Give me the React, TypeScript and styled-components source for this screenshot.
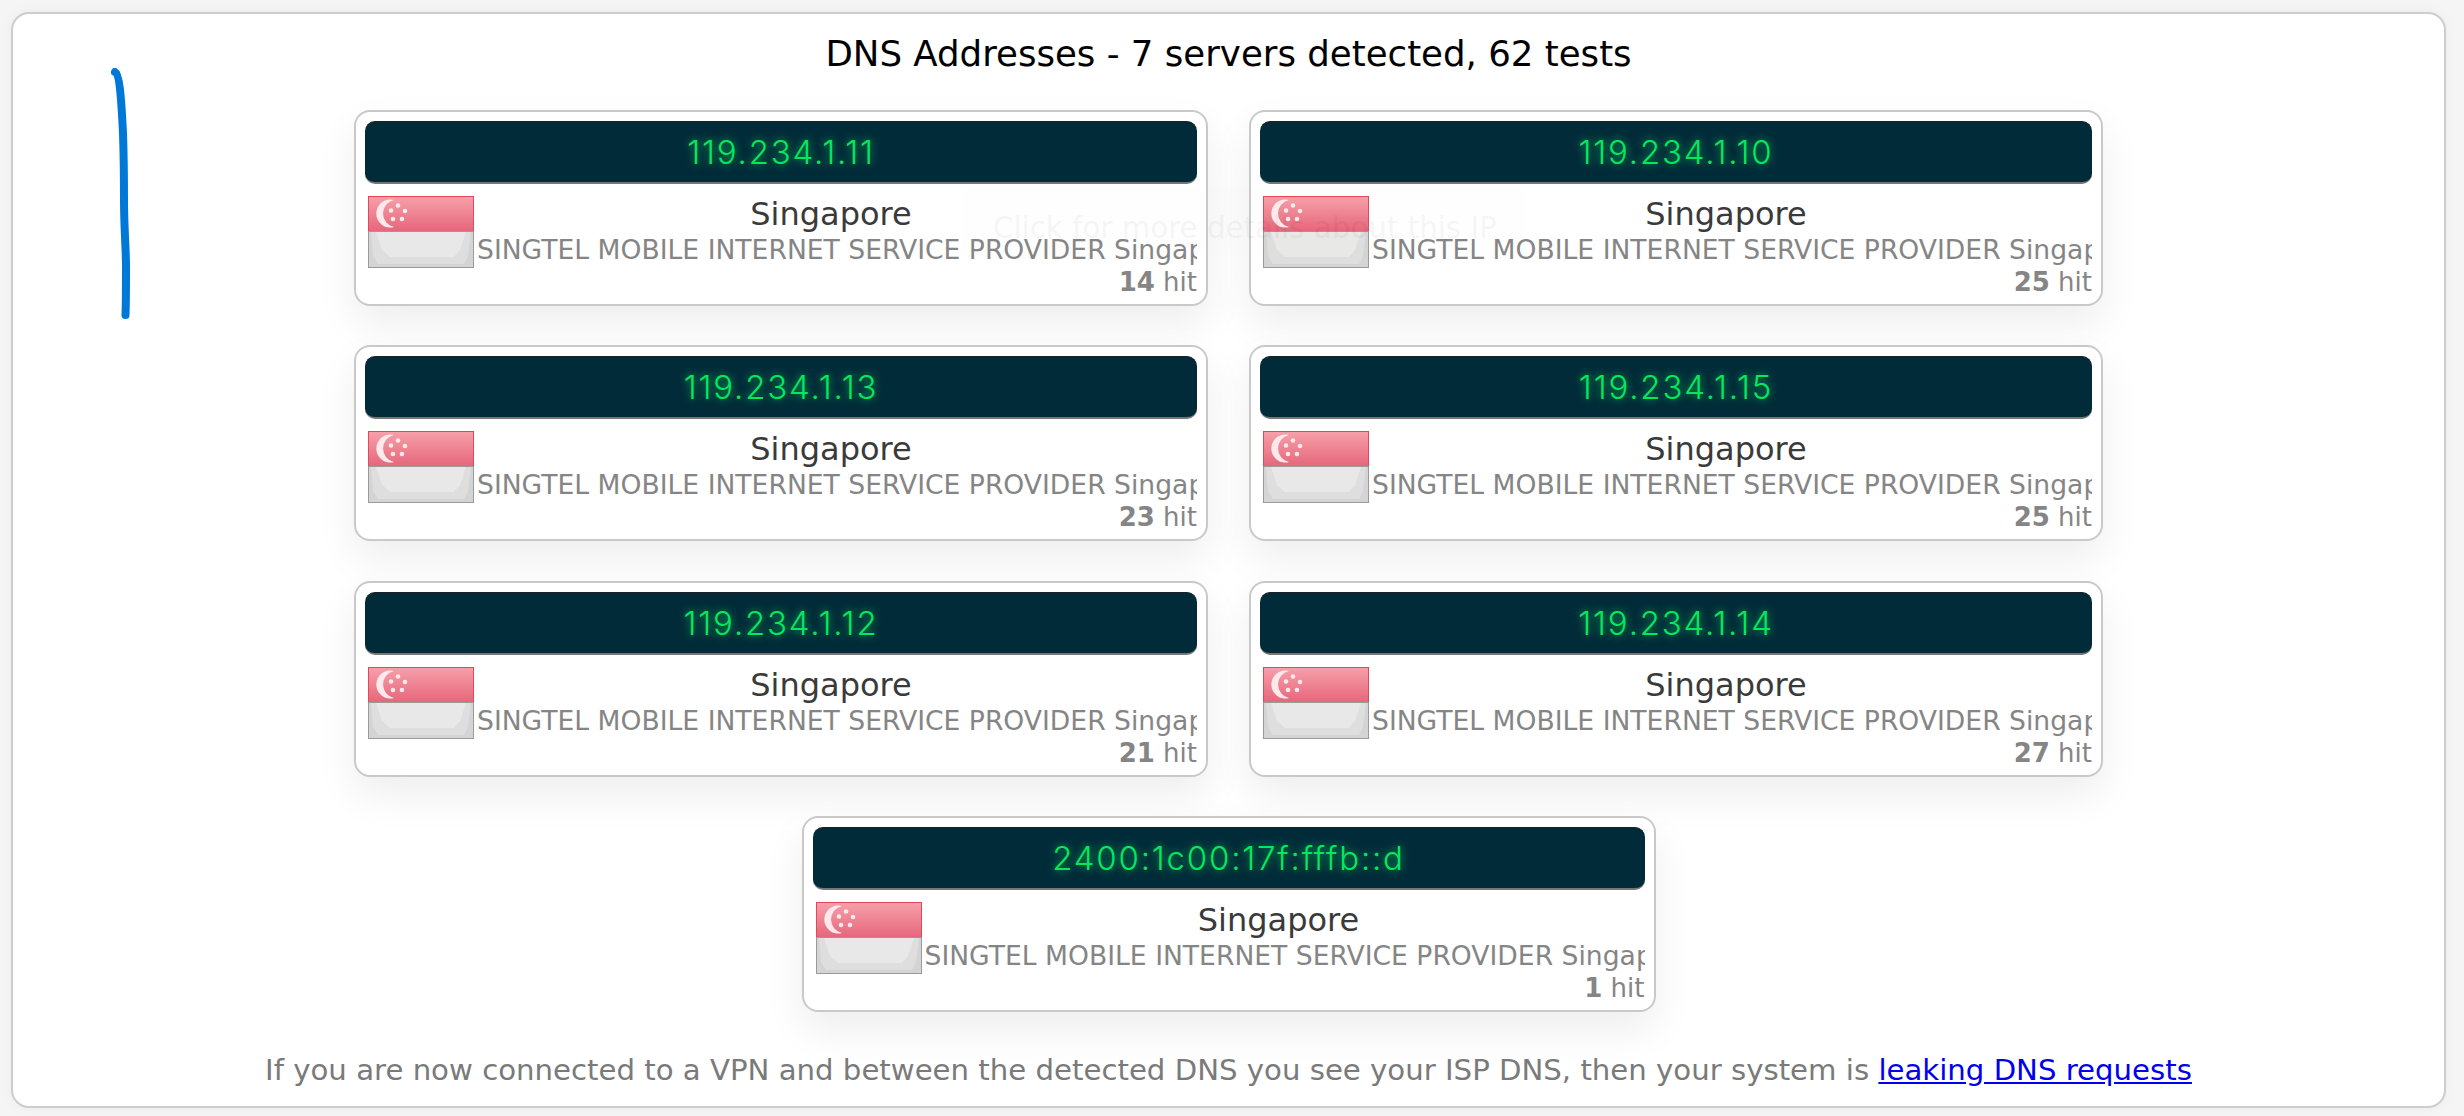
import React from 'react';
import styled, { createGlobalStyle } from 'styled-components';

const servers = [
  { ip: '119.234.1.11', hits: 14 },
  { ip: '119.234.1.10', hits: 25 },
  { ip: '119.234.1.13', hits: 23 },
  { ip: '119.234.1.15', hits: 25 },
  { ip: '119.234.1.12', hits: 21 },
  { ip: '119.234.1.14', hits: 27 },
  { ip: '2400:1c00:17f:fffb::d', hits: 1 },
];

const Flag = () => (
  <FlagSvg viewBox="0 0 106 72" aria-hidden="true">
    <defs>
      <linearGradient id="sgRed" x1="0" y1="0" x2="0" y2="1">
        <stop offset="0" stopColor="#f7a0aa" />
        <stop offset="1" stopColor="#e5667a" />
      </linearGradient>
    </defs>
    <rect x="0.5" y="0.5" width="105" height="35" fill="url(#sgRed)" stroke="#e4465c" />
    <rect x="0.5" y="35.5" width="105" height="36" fill="#d4d4d4" stroke="#9a9a9a" />
    <path d="M3 36H103L100 60 96 68H10L5 60Z" fill="#dedede" />
    <path d="M8 36H98L92 54 86 61H22L14 54Z" fill="#e8e8e8" />
    <path d="M26 4A14 14 0 1 0 26 31A13.800 13.800 0 0 1 26 4Z" fill="#fbe9ec" />
    <g fill="#fbe9ec">
      <circle cx="30" cy="9.500" r="2.300" />
      <circle cx="37" cy="15" r="2.300" />
      <circle cx="34" cy="23" r="2.300" />
      <circle cx="25" cy="23" r="2.300" />
      <circle cx="23" cy="14.500" r="2.300" />
    </g>
  </FlagSvg>
);

export default function App() {
  return (
    <>
      <GlobalStyle />
      <Panel>
        <Stroke viewBox="0 0 30 270" aria-hidden="true">
          <path
            d="M4 4C8 6 10 24 12 65C13 95 13 110 13 132C13 160 15 180 15 199C15 220 15 235 14.500 247"
            fill="none"
            stroke="#0078d7"
            strokeWidth="8"
            strokeLinecap="round"
          />
        </Stroke>
        <Tooltip>Click for more details about this IP</Tooltip>
        <Title>DNS Addresses - 7 servers detected, 62 tests</Title>
        <Grid>
          {servers.map((s) => (
            <Card key={s.ip}>
              <IpBar>{s.ip}</IpBar>
              <Info>
                <Flag />
                <Details>
                  <Country>Singapore</Country>
                  <Provider>SINGTEL MOBILE INTERNET SERVICE PROVIDER Singapore</Provider>
                  <Hits>
                    <b>{s.hits}</b> hit
                  </Hits>
                </Details>
              </Info>
            </Card>
          ))}
        </Grid>
        <Footer>
          If you are now connected to a VPN and between the detected DNS you see your ISP DNS, then your system is{' '}
          <a href="#leak">leaking DNS requests</a>
        </Footer>
      </Panel>
    </>
  );
}

const GlobalStyle = createGlobalStyle`
  html, body {
    margin: 0;
    background: #f5f5f5;
    font-family: "DejaVu Sans", Verdana, sans-serif;
  }
  body {
    padding: 12px 18px 8px 11px;
  }
`;

const Panel = styled.main`
  position: relative;
  box-sizing: border-box;
  height: 1096px;
  padding-top: 18px;
  background: #fff;
  border: 2px solid #cdcdcd;
  border-radius: 18px;
  box-shadow: 0 0 14px rgba(0, 0, 0, 0.04);
`;

const Stroke = styled.svg`
  position: absolute;
  left: 98px;
  top: 54px;
  width: 30px;
  height: 270px;
`;

const Tooltip = styled.div`
  position: absolute;
  left: 948px;
  top: 173px;
  padding: 24px 32px;
  border-radius: 16px;
  font-size: 29.300px;
  color: #000;
  white-space: nowrap;
  background: rgba(255, 240, 200, 0.08);
  opacity: 0.035;
`;

const Title = styled.h1`
  margin: 0 0 34px;
  font-size: 35.600px;
  line-height: 44px;
  font-weight: 400;
  text-align: center;
  color: #000;
`;

const Grid = styled.div`
  display: flex;
  flex-wrap: wrap;
  justify-content: center;
  gap: 39.330px 41px;
  width: 1749px;
  margin: 0 auto;
`;

const Card = styled.article`
  box-sizing: border-box;
  width: 854px;
  height: 196px;
  padding: 9px 9px 0 9px;
  background: #fff;
  border: 2px solid #c9c9c9;
  border-radius: 16px;
  box-shadow: 0 18px 40px rgba(0, 0, 0, 0.07);
`;

const IpBar = styled.div`
  box-sizing: border-box;
  height: 63px;
  line-height: 60px;
  text-align: center;
  font-family: "Inter", sans-serif;
  font-size: 33px;
  font-weight: 300;
  letter-spacing: 1.800px;
  color: #04e85e;
  text-shadow: 0 0 9px rgba(0, 255, 100, 0.7);
  background: #012b39;
  border-top: 1px solid #1c2325;
  border-bottom: 2px solid #777;
  border-radius: 10px;
`;

const Info = styled.div`
  display: flex;
  margin-top: 11px;
`;

const FlagSvg = styled.svg`
  flex: none;
  width: 106px;
  height: 72px;
  margin: 1px 3px 0 3px;
`;

const Details = styled.div`
  flex: 1;
  min-width: 0;
`;

const Country = styled.div`
  font-size: 32px;
  line-height: 38px;
  text-align: center;
  color: #3a3a3a;
  padding-right: 12px;
`;

const Provider = styled.div`
  font-size: 26.600px;
  line-height: 33px;
  white-space: nowrap;
  overflow: hidden;
  color: #858585;
`;

const Hits = styled.div`
  margin-top: 1px;
  font-size: 26px;
  line-height: 31px;
  text-align: right;
  color: #858585;
`;

const Footer = styled.p`
  margin: 39px 0 0;
  font-size: 29.200px;
  line-height: 38px;
  text-align: center;
  color: #7a7a7a;

  a {
    color: #0000ee;
  }
`;
